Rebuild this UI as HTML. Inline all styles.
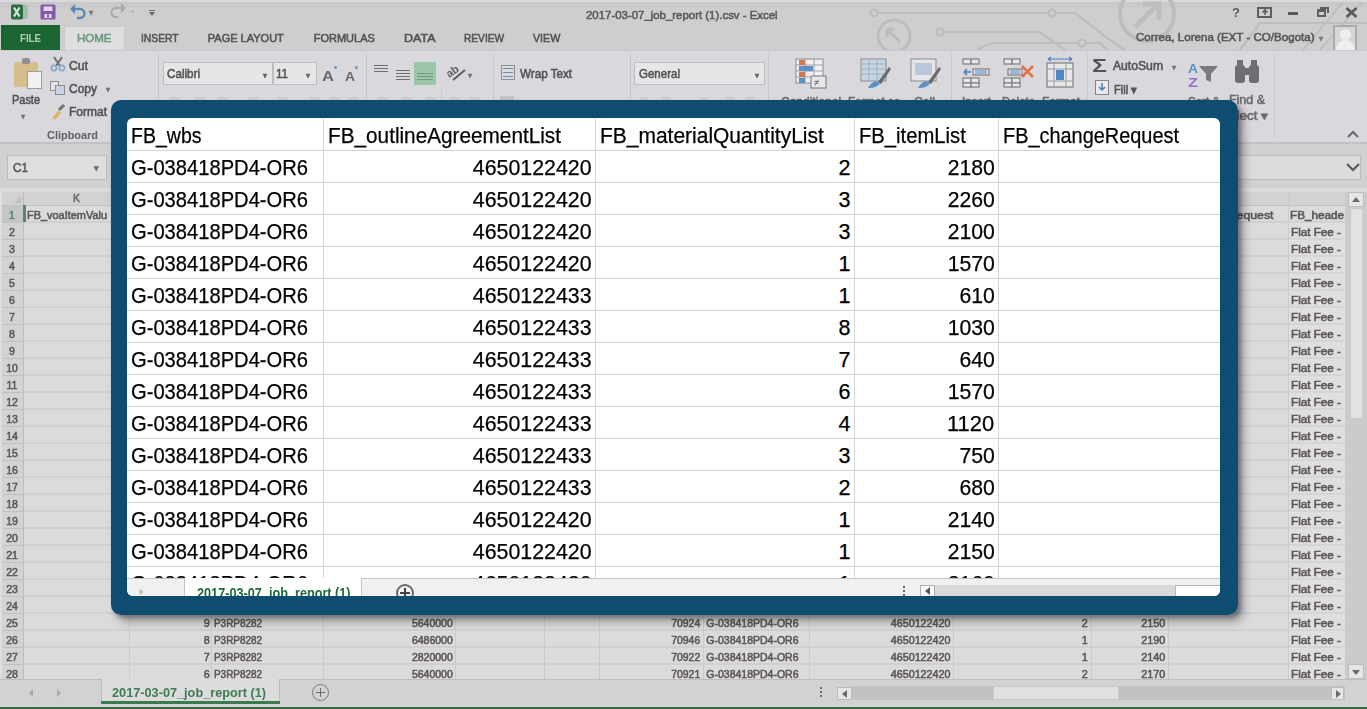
<!DOCTYPE html>
<html><head><meta charset="utf-8">
<style>
*{margin:0;padding:0;box-sizing:border-box}
html,body{width:1367px;height:709px;overflow:hidden;background:#d8d8da;font-family:"Liberation Sans",sans-serif;position:relative}
.a{position:absolute}
.t{position:absolute;white-space:pre;line-height:1}
svg{position:absolute;overflow:visible}
</style></head><body>
<div class="a" style="left:0;top:0;width:1367px;height:709px;filter:blur(0.5px)">
<div class="a" style="left:0px;top:0px;width:1367px;height:50px;background:#cececf;"></div>
<div class="a" style="left:0px;top:0px;width:1367px;height:1.5px;background:#dadadc;"></div>
<div class="a" style="left:0px;top:1.5px;width:1367px;height:5px;background:#c9c9cb;"></div>
<svg style="left:0;top:0" width="1367" height="50" viewBox="0 0 1367 50">
<g fill="none" stroke="#bdbdbf" stroke-width="2.2">
<circle cx="874" cy="13" r="3.5"/><path d="M877.5 13H1048.5"/><circle cx="1052" cy="13" r="3.5"/><path d="M1055.5 13H1075L1110 40L1125 50"/>
<circle cx="894" cy="36" r="16" stroke-width="3"/><path d="M887 29L900 42M887 29h8M887 29v8" stroke-width="3"/>
<circle cx="940" cy="32" r="3.5"/><path d="M943.5 32H1040L1065 50"/>
<path d="M975 52Q985 43 1000 43H1078"/><circle cx="1082" cy="43" r="3.5"/><path d="M1085.5 43H1100L1110 52"/>
<circle cx="1147" cy="14" r="27" stroke-width="4"/><path d="M1135 27L1158 4M1143 4h16v16" stroke-width="5"/>
<path d="M1000 0L1080 0" stroke="none"/>
<path d="M1343 2L1303 50M1362 2L1320 50" stroke-width="1.8"/>
<path d="M1240 50L1260 23H1367" stroke-width="2.2"/>
</g></svg>
<svg style="left:10px;top:3px" width="18" height="18" viewBox="0 0 18 18">
<rect x="8" y="2.5" width="9" height="13" rx="1.5" fill="#a6bfae" stroke="#8fae99" stroke-width="0.8"/>
<path d="M12 3V15" stroke="#c9d8cd" stroke-width="1"/>
<rect x="1" y="1.5" width="12" height="15" rx="2" fill="#2a6e42"/>
<path d="M4 4.5L9.5 13.5M9.5 4.5L4 13.5" stroke="#d5e3d9" stroke-width="2.2"/>
</svg>
<svg style="left:40px;top:4px" width="16" height="16" viewBox="0 0 16 16">
<rect x="0.5" y="0.5" width="15" height="15" rx="1.5" fill="#8459aa"/>
<rect x="3.5" y="2.5" width="9" height="4.5" fill="#e2d6ec"/>
<rect x="4.5" y="10" width="7" height="4" fill="#e2d6ec"/>
<rect x="7" y="10.5" width="2" height="3" fill="#8459aa"/>
</svg>
<svg style="left:68px;top:1px" width="20" height="18" viewBox="0 0 20 18"><path d="M4 8H12A4.5 4.5 0 0 1 12 17H9" fill="none" stroke="#5d86b3" stroke-width="2.4"/><path d="M2 8L7 3V13Z" fill="#5d86b3"/></svg>
<svg style="left:108px;top:1px" width="20" height="18" viewBox="0 0 20 18"><path d="M16 7H8A4.5 4.5 0 0 0 8 16H10" fill="none" stroke="#a9a9ab" stroke-width="2"/><path d="M18 7L13 2V12Z" fill="#a9a9ab"/></svg>
<div class="a" style="left:149px;top:10px;width:6px;height:1.3px;background:#6a6a6a;"></div>
<svg style="left:149px;top:12px" width="6" height="4" viewBox="0 0 6 4"><path d="M0 0H6L3 4Z" fill="#6a6a6a"/></svg>
<div class="a" style="left:1257px;top:6.5px;width:15px;height:11px;border:2px solid #5e5e60;border-top-width:2.5px"></div>
<svg style="left:1261px;top:9px" width="8" height="7" viewBox="0 0 8 7"><path d="M4 1V6M1.5 3.5L4 1L6.5 3.5" stroke="#5e5e60" stroke-width="1.6" fill="none"/></svg>
<div class="a" style="left:1288px;top:12px;width:10px;height:3px;background:#5a5a5c;"></div>
<div class="a" style="left:1317px;top:9px;width:9px;height:8px;border:2px solid #5e5e60;border-top-width:3px"></div>
<div class="a" style="left:1320px;top:6.5px;width:8.5px;height:6px;border:2px solid #5e5e60;border-bottom:none;border-left:none"></div>
<svg style="left:1345px;top:7px" width="13" height="11" viewBox="0 0 13 11"><path d="M1.5 1L11.5 10M11.5 1L1.5 10" stroke="#5a5a5c" stroke-width="2.8"/></svg>
<div class="a" style="left:1px;top:25px;width:59px;height:25px;background:#1b6533;"></div>
<div class="a" style="left:64px;top:26px;width:61px;height:24px;background:#dedee0;border:1px solid #c9c9cb;border-bottom:none;"></div>
<div class="a" style="left:1333px;top:25px;width:24px;height:25px;background:#d6d6d8;border:2px solid #ababad;border-bottom:none;"></div>
<div class="a" style="left:1340px;top:29px;width:11px;height:11px;border-radius:50%;background:#eeeef0"></div>
<div class="a" style="left:1336px;top:40px;width:19px;height:10px;border-radius:9px 9px 0 0;background:#eeeef0"></div>
<div class="a" style="left:0px;top:50px;width:1367px;height:93px;background:#d9d8dc;"></div>
<div class="a" style="left:0px;top:49.5px;width:1367px;height:1.5px;background:#cacacc;"></div>
<div class="a" style="left:0px;top:142px;width:1367px;height:1.5px;background:#c2c2c4;"></div>
<div class="a" style="left:441px;top:86px;width:1px;height:14px;background:#cbcbcd;"></div>
<div class="a" style="left:158px;top:54px;width:1px;height:84px;background:#c7c7c9;"></div>
<div class="a" style="left:366px;top:54px;width:1px;height:84px;background:#c7c7c9;"></div>
<div class="a" style="left:493px;top:54px;width:1px;height:84px;background:#c7c7c9;"></div>
<div class="a" style="left:630px;top:54px;width:1px;height:84px;background:#c7c7c9;"></div>
<div class="a" style="left:768px;top:54px;width:1px;height:84px;background:#c7c7c9;"></div>
<div class="a" style="left:951px;top:54px;width:1px;height:84px;background:#c7c7c9;"></div>
<div class="a" style="left:1087px;top:54px;width:1px;height:84px;background:#c7c7c9;"></div>
<div class="a" style="left:1274px;top:54px;width:1px;height:84px;background:#c7c7c9;"></div>
<div class="a" style="left:14px;top:62px;width:24px;height:25px;background:#d6bd8c;border-radius:2px;"></div>
<div class="a" style="left:22px;top:58px;width:8px;height:6px;background:#8f8f8f;border-radius:2px;"></div>
<div class="a" style="left:27px;top:71px;width:15px;height:18px;background:#f1f1f1;border:1.5px solid #9c9c9c"></div>
<svg style="left:49px;top:56px" width="18" height="16" viewBox="0 0 18 16"><path d="M5 1L11 10M13 1L7 10" stroke="#707070" stroke-width="2"/><circle cx="5" cy="12" r="2.6" fill="none" stroke="#8aa6c9" stroke-width="1.6"/><circle cx="13" cy="12" r="2.6" fill="none" stroke="#8aa6c9" stroke-width="1.6"/></svg>
<div class="a" style="left:50px;top:81px;width:9px;height:10px;border:1.3px solid #909090;background:#e4e4e6"></div>
<div class="a" style="left:55px;top:85px;width:10px;height:10px;border:1.3px solid #909090;background:#c7d3e2"></div>
<svg style="left:50px;top:104px" width="16" height="16" viewBox="0 0 16 16"><path d="M9 6L14 1" stroke="#707070" stroke-width="3"/><path d="M2 14L9 6L11 9L5 16Z" fill="#d9b66b"/></svg>
<div class="a" style="left:163px;top:62px;width:110px;height:23px;background:#e6e6e8;border:1px solid #bdbdbf"></div>
<div class="a" style="left:273px;top:62px;width:44px;height:23px;background:#e6e6e8;border:1px solid #bdbdbf"></div>
<div class="a" style="left:334px;top:66px;width:2.5px;height:2.5px;background:#6d9ad0;border-radius:50%;"></div>
<div class="a" style="left:355px;top:66px;width:2.5px;height:2.5px;background:#6d9ad0;border-radius:50%;"></div>
<div class="a" style="left:374px;top:64.5px;width:14px;height:1.8px;background:#6e6e70;"></div>
<div class="a" style="left:374px;top:67.5px;width:14px;height:1.8px;background:#6e6e70;"></div>
<div class="a" style="left:374px;top:70.5px;width:14px;height:1.8px;background:#6e6e70;"></div>
<div class="a" style="left:396px;top:69.5px;width:14px;height:1.8px;background:#6e6e70;"></div>
<div class="a" style="left:396px;top:72.5px;width:14px;height:1.8px;background:#6e6e70;"></div>
<div class="a" style="left:396px;top:75.5px;width:14px;height:1.8px;background:#6e6e70;"></div>
<div class="a" style="left:396px;top:78.5px;width:14px;height:1.8px;background:#6e6e70;"></div>
<div class="a" style="left:414px;top:62px;width:22px;height:23px;background:#9ac7a8;"></div>
<div class="a" style="left:417px;top:72.5px;width:16px;height:1.8px;background:#6f9a7d;"></div>
<div class="a" style="left:417px;top:75.5px;width:16px;height:1.8px;background:#6f9a7d;"></div>
<div class="a" style="left:417px;top:78.5px;width:16px;height:1.8px;background:#6f9a7d;"></div>
<svg style="left:447px;top:63px" width="22" height="20" viewBox="0 0 22 20"><text x="0" y="12" font-family="Liberation Sans" font-size="11" font-weight="bold" fill="#5e5e60" transform="rotate(-35 6 10)">ab</text><path d="M6 17L18 7" stroke="#5e5e60" stroke-width="2"/></svg>
<div class="a" style="left:170px;top:97px;width:10px;height:3px;background:#cdcdcf;"></div>
<div class="a" style="left:195px;top:97px;width:10px;height:3px;background:#cdcdcf;"></div>
<div class="a" style="left:218px;top:97px;width:10px;height:3px;background:#cdcdcf;"></div>
<div class="a" style="left:248px;top:97px;width:10px;height:3px;background:#cdcdcf;"></div>
<div class="a" style="left:278px;top:97px;width:10px;height:3px;background:#cdcdcf;"></div>
<div class="a" style="left:310px;top:97px;width:10px;height:3px;background:#cdcdcf;"></div>
<div class="a" style="left:330px;top:97px;width:10px;height:3px;background:#cdcdcf;"></div>
<div class="a" style="left:348px;top:97px;width:10px;height:3px;background:#cdcdcf;"></div>
<div class="a" style="left:378px;top:97px;width:10px;height:3px;background:#cdcdcf;"></div>
<div class="a" style="left:402px;top:97px;width:10px;height:3px;background:#cdcdcf;"></div>
<div class="a" style="left:426px;top:97px;width:10px;height:3px;background:#cdcdcf;"></div>
<div class="a" style="left:450px;top:97px;width:10px;height:3px;background:#cdcdcf;"></div>
<div class="a" style="left:470px;top:97px;width:10px;height:3px;background:#cdcdcf;"></div>
<div class="a" style="left:501px;top:65px;width:14px;height:15px;border:1px solid #8f8f8f;background:#d8dde4"></div>
<div class="a" style="left:503px;top:68px;width:10px;height:1.2px;background:#7a8aa0;"></div>
<div class="a" style="left:503px;top:72px;width:10px;height:1.2px;background:#7a8aa0;"></div>
<div class="a" style="left:503px;top:76px;width:10px;height:1.2px;background:#7a8aa0;"></div>
<div class="a" style="left:500px;top:96px;width:14px;height:4px;background:#c3c3c5;"></div>
<div class="a" style="left:634px;top:62px;width:131px;height:23px;background:#e6e6e8;border:1px solid #bdbdbf"></div>
<div class="a" style="left:640px;top:97px;width:8px;height:3px;background:#cdcdcf;"></div>
<div class="a" style="left:662px;top:97px;width:8px;height:3px;background:#cdcdcf;"></div>
<div class="a" style="left:700px;top:97px;width:8px;height:3px;background:#cdcdcf;"></div>
<div class="a" style="left:726px;top:97px;width:8px;height:3px;background:#cdcdcf;"></div>
<div class="a" style="left:746px;top:97px;width:8px;height:3px;background:#cdcdcf;"></div>
<svg style="left:795px;top:58px" width="32" height="31" viewBox="0 0 32 31">
<rect x="1" y="1" width="27" height="24" fill="#f0f0f2" stroke="#8c8c8e"/>
<path d="M1 7H28M1 13H28M1 19H28M10 1V25M19 1V25" stroke="#a0a0a2"/>
<rect x="4" y="2" width="6" height="5" fill="#d9774c"/><rect x="4" y="8" width="14" height="5" fill="#5b8fc6"/><rect x="4" y="14" width="6" height="5" fill="#d9774c"/><rect x="4" y="20" width="6" height="5" fill="#5b8fc6"/>
<rect x="16" y="18" width="15" height="12" fill="#e8e8ea" stroke="#777"/><text x="19" y="28" font-size="10" font-family="Liberation Sans" fill="#555">≠</text>
</svg>
<svg style="left:860px;top:58px" width="32" height="31" viewBox="0 0 32 31">
<rect x="1" y="1" width="25" height="22" fill="#c7d4e2" stroke="#8c8c8e"/>
<path d="M1 6H26M1 11H26M1 16H26M9 1V23M17 1V23" stroke="#9fb0c4"/>
<path d="M18 24L29 9L31 11L21 26Z" fill="#6a6a6a"/><path d="M8 30Q14 20 20 25Q18 30 8 30Z" fill="#5b8fc6"/>
</svg>
<svg style="left:910px;top:58px" width="32" height="31" viewBox="0 0 32 31">
<rect x="1" y="1" width="25" height="22" fill="#e6e6e8" stroke="#8c8c8e"/>
<rect x="5" y="5" width="17" height="12" fill="#b7c8da"/>
<path d="M18 24L29 9L31 11L21 26Z" fill="#6a6a6a"/><path d="M8 30Q14 20 20 25Q18 30 8 30Z" fill="#5b8fc6"/>
</svg>
<svg style="left:961px;top:58px" width="30" height="30" viewBox="0 0 30 30">
<g fill="#e8e8ea" stroke="#858587" stroke-width="1.3"><rect x="2" y="1" width="8" height="5"/><rect x="10" y="1" width="8" height="5"/><rect x="12" y="11" width="16" height="6"/><rect x="2" y="20" width="8" height="5"/><rect x="10" y="20" width="8" height="5"/><rect x="2" y="25" width="8" height="4"/><rect x="10" y="25" width="8" height="4"/></g>
<rect x="14" y="12" width="12" height="4" fill="#9bb7d6"/>
<path d="M3 14H10M3 14L6 11M3 14L6 17" stroke="#4a80c0" stroke-width="1.6" fill="none"/>
</svg>
<svg style="left:1002px;top:58px" width="34" height="30" viewBox="0 0 34 30">
<g fill="#e8e8ea" stroke="#858587" stroke-width="1.3"><rect x="2" y="1" width="8" height="5"/><rect x="10" y="1" width="8" height="5"/><rect x="6" y="11" width="14" height="6"/><rect x="2" y="20" width="8" height="5"/><rect x="10" y="20" width="8" height="5"/><rect x="2" y="25" width="8" height="4"/><rect x="10" y="25" width="8" height="4"/></g>
<rect x="8" y="12" width="10" height="4" fill="#9bb7d6"/>
<path d="M20 8L31 19M31 8L20 19" stroke="#e0733f" stroke-width="2.6"/>
</svg>
<svg style="left:1044px;top:57px" width="32" height="32" viewBox="0 0 32 32">
<rect x="3" y="6" width="26" height="24" fill="#e8e8ea" stroke="#858587" stroke-width="1.3"/>
<path d="M3 12H29M3 24H29M10 6V30M22 6V30" stroke="#9a9a9c"/>
<rect x="12" y="13" width="8" height="10" fill="#4f87c4"/>
<path d="M4 2H28M4 2L7 0M4 2L7 4M28 2L25 0M28 2L25 4" stroke="#4a80c0" stroke-width="1.2" fill="none"/>
</svg>
<div class="a" style="left:1095px;top:80px;width:14px;height:15px;border:1.3px solid #858587;background:#e9e9eb"></div>
<svg style="left:1096px;top:81px" width="12" height="12" viewBox="0 0 12 12"><path d="M6 2V9M3 6L6 9L9 6" stroke="#4a80c0" stroke-width="1.5" fill="none"/></svg>
<svg style="left:1198px;top:64px" width="22" height="20" viewBox="0 0 22 20"><path d="M1 2H20L13 10V18L8 16V10Z" fill="#7a7a7c"/></svg>
<svg style="left:1233px;top:59px" width="28" height="26" viewBox="0 0 28 26"><g fill="#6e6e70"><rect x="2" y="6" width="10" height="18" rx="3"/><rect x="16" y="6" width="10" height="18" rx="3"/><rect x="4" y="1" width="6" height="8"/><rect x="18" y="1" width="6" height="8"/><rect x="10" y="9" width="8" height="7"/></g></svg>
<svg style="left:1346px;top:129px" width="14" height="10" viewBox="0 0 14 10"><path d="M2 8L7 3L12 8" fill="none" stroke="#6a6a6c" stroke-width="2"/></svg>
<div class="a" style="left:0px;top:143.5px;width:1367px;height:48.5px;background:#d1d1d4;"></div>
<div class="a" style="left:7px;top:155px;width:100px;height:25px;background:#dededf;border:1.5px solid #bcbcbf"></div>
<div class="a" style="left:120px;top:155px;width:1241px;height:25px;background:#dcdcdf;border:1.5px solid #bcbcbf"></div>
<svg style="left:1345px;top:162px" width="16" height="10" viewBox="0 0 16 10"><path d="M2 2L8 8L14 2" fill="none" stroke="#5a5a5c" stroke-width="2.2"/></svg>
<div class="a" style="left:0px;top:188px;width:1367px;height:492px;background:#dbdbde;"></div>
<div class="a" style="left:0px;top:192px;width:1345px;height:13px;background:#d2d2d5;"></div>
<div class="a" style="left:0px;top:205px;width:23px;height:475px;background:#d3d3d5;"></div>
<svg style="left:14px;top:196px" width="7" height="7" viewBox="0 0 7 7"><path d="M7 0V7H0Z" fill="#c0c0c2"/></svg>
<div class="a" style="left:0px;top:205px;width:23px;height:17px;background:#c6c6c8;"></div>
<div class="a" style="left:0px;top:204.5px;width:1345px;height:1px;background:#c2c2c4;"></div>
<div class="a" style="left:23px;top:221px;width:1322px;height:2px;background:#d0d0d3;"></div>
<div class="a" style="left:0px;top:221.5px;width:23px;height:1px;background:#c0c0c2;"></div>
<div class="a" style="left:23px;top:238px;width:1322px;height:2px;background:#d0d0d3;"></div>
<div class="a" style="left:0px;top:238.5px;width:23px;height:1px;background:#c0c0c2;"></div>
<div class="a" style="left:23px;top:255px;width:1322px;height:2px;background:#d0d0d3;"></div>
<div class="a" style="left:0px;top:255.5px;width:23px;height:1px;background:#c0c0c2;"></div>
<div class="a" style="left:23px;top:272px;width:1322px;height:2px;background:#d0d0d3;"></div>
<div class="a" style="left:0px;top:272.5px;width:23px;height:1px;background:#c0c0c2;"></div>
<div class="a" style="left:23px;top:289px;width:1322px;height:2px;background:#d0d0d3;"></div>
<div class="a" style="left:0px;top:289.5px;width:23px;height:1px;background:#c0c0c2;"></div>
<div class="a" style="left:23px;top:306px;width:1322px;height:2px;background:#d0d0d3;"></div>
<div class="a" style="left:0px;top:306.5px;width:23px;height:1px;background:#c0c0c2;"></div>
<div class="a" style="left:23px;top:323px;width:1322px;height:2px;background:#d0d0d3;"></div>
<div class="a" style="left:0px;top:323.5px;width:23px;height:1px;background:#c0c0c2;"></div>
<div class="a" style="left:23px;top:340px;width:1322px;height:2px;background:#d0d0d3;"></div>
<div class="a" style="left:0px;top:340.5px;width:23px;height:1px;background:#c0c0c2;"></div>
<div class="a" style="left:23px;top:357px;width:1322px;height:2px;background:#d0d0d3;"></div>
<div class="a" style="left:0px;top:357.5px;width:23px;height:1px;background:#c0c0c2;"></div>
<div class="a" style="left:23px;top:374px;width:1322px;height:2px;background:#d0d0d3;"></div>
<div class="a" style="left:0px;top:374.5px;width:23px;height:1px;background:#c0c0c2;"></div>
<div class="a" style="left:23px;top:391px;width:1322px;height:2px;background:#d0d0d3;"></div>
<div class="a" style="left:0px;top:391.5px;width:23px;height:1px;background:#c0c0c2;"></div>
<div class="a" style="left:23px;top:408px;width:1322px;height:2px;background:#d0d0d3;"></div>
<div class="a" style="left:0px;top:408.5px;width:23px;height:1px;background:#c0c0c2;"></div>
<div class="a" style="left:23px;top:425px;width:1322px;height:2px;background:#d0d0d3;"></div>
<div class="a" style="left:0px;top:425.5px;width:23px;height:1px;background:#c0c0c2;"></div>
<div class="a" style="left:23px;top:442px;width:1322px;height:2px;background:#d0d0d3;"></div>
<div class="a" style="left:0px;top:442.5px;width:23px;height:1px;background:#c0c0c2;"></div>
<div class="a" style="left:23px;top:459px;width:1322px;height:2px;background:#d0d0d3;"></div>
<div class="a" style="left:0px;top:459.5px;width:23px;height:1px;background:#c0c0c2;"></div>
<div class="a" style="left:23px;top:476px;width:1322px;height:2px;background:#d0d0d3;"></div>
<div class="a" style="left:0px;top:476.5px;width:23px;height:1px;background:#c0c0c2;"></div>
<div class="a" style="left:23px;top:493px;width:1322px;height:2px;background:#d0d0d3;"></div>
<div class="a" style="left:0px;top:493.5px;width:23px;height:1px;background:#c0c0c2;"></div>
<div class="a" style="left:23px;top:510px;width:1322px;height:2px;background:#d0d0d3;"></div>
<div class="a" style="left:0px;top:510.5px;width:23px;height:1px;background:#c0c0c2;"></div>
<div class="a" style="left:23px;top:527px;width:1322px;height:2px;background:#d0d0d3;"></div>
<div class="a" style="left:0px;top:527.5px;width:23px;height:1px;background:#c0c0c2;"></div>
<div class="a" style="left:23px;top:544px;width:1322px;height:2px;background:#d0d0d3;"></div>
<div class="a" style="left:0px;top:544.5px;width:23px;height:1px;background:#c0c0c2;"></div>
<div class="a" style="left:23px;top:561px;width:1322px;height:2px;background:#d0d0d3;"></div>
<div class="a" style="left:0px;top:561.5px;width:23px;height:1px;background:#c0c0c2;"></div>
<div class="a" style="left:23px;top:578px;width:1322px;height:2px;background:#d0d0d3;"></div>
<div class="a" style="left:0px;top:578.5px;width:23px;height:1px;background:#c0c0c2;"></div>
<div class="a" style="left:23px;top:595px;width:1322px;height:2px;background:#d0d0d3;"></div>
<div class="a" style="left:0px;top:595.5px;width:23px;height:1px;background:#c0c0c2;"></div>
<div class="a" style="left:23px;top:612px;width:1322px;height:2px;background:#d0d0d3;"></div>
<div class="a" style="left:0px;top:612.5px;width:23px;height:1px;background:#c0c0c2;"></div>
<div class="a" style="left:23px;top:629px;width:1322px;height:2px;background:#d0d0d3;"></div>
<div class="a" style="left:0px;top:629.5px;width:23px;height:1px;background:#c0c0c2;"></div>
<div class="a" style="left:23px;top:646px;width:1322px;height:2px;background:#d0d0d3;"></div>
<div class="a" style="left:0px;top:646.5px;width:23px;height:1px;background:#c0c0c2;"></div>
<div class="a" style="left:23px;top:663px;width:1322px;height:2px;background:#d0d0d3;"></div>
<div class="a" style="left:0px;top:663.5px;width:23px;height:1px;background:#c0c0c2;"></div>
<div class="a" style="left:23px;top:680px;width:1322px;height:2px;background:#d0d0d3;"></div>
<div class="a" style="left:0px;top:680.5px;width:23px;height:1px;background:#c0c0c2;"></div>
<div class="a" style="left:22.5px;top:192px;width:1px;height:488px;background:#cbcbcd;"></div>
<div class="a" style="left:128.5px;top:192px;width:1px;height:488px;background:#cbcbcd;"></div>
<div class="a" style="left:210.5px;top:192px;width:1px;height:488px;background:#cbcbcd;"></div>
<div class="a" style="left:322.5px;top:192px;width:1px;height:488px;background:#cbcbcd;"></div>
<div class="a" style="left:454.5px;top:192px;width:1px;height:488px;background:#cbcbcd;"></div>
<div class="a" style="left:543.5px;top:192px;width:1px;height:488px;background:#cbcbcd;"></div>
<div class="a" style="left:598.5px;top:192px;width:1px;height:488px;background:#cbcbcd;"></div>
<div class="a" style="left:702.5px;top:192px;width:1px;height:488px;background:#cbcbcd;"></div>
<div class="a" style="left:808.5px;top:192px;width:1px;height:488px;background:#cbcbcd;"></div>
<div class="a" style="left:952.5px;top:192px;width:1px;height:488px;background:#cbcbcd;"></div>
<div class="a" style="left:1090.5px;top:192px;width:1px;height:488px;background:#cbcbcd;"></div>
<div class="a" style="left:1167.5px;top:192px;width:1px;height:488px;background:#cbcbcd;"></div>
<div class="a" style="left:1287.5px;top:192px;width:1px;height:488px;background:#cbcbcd;"></div>
<div class="a" style="left:1344.5px;top:192px;width:1px;height:488px;background:#cbcbcd;"></div>
<div class="a" style="left:22.5px;top:192px;width:1.5px;height:488px;background:#bdbdc0;"></div>
<div class="a" style="left:0px;top:192px;width:2px;height:488px;background:#dededf;"></div>
<div class="a" style="left:23px;top:205px;width:2.5px;height:17px;background:#4f8a62;"></div>
<div class="a" style="left:1289px;top:222px;width:56px;height:458px;background:rgba(255,255,255,.12);"></div>
<div class="a" style="left:1345px;top:192px;width:22px;height:488px;background:#cbcbcd;"></div>
<div class="a" style="left:1348px;top:192px;width:16px;height:15px;background:#e6e6e8;border:1px solid #bcbcbe"></div>
<svg style="left:1351px;top:196px" width="10" height="7" viewBox="0 0 10 7"><path d="M1 6L5 1L9 6Z" fill="#6a6a6c"/></svg>
<div class="a" style="left:1350px;top:208px;width:13px;height:211px;background:#e2e2e4;border:1px solid #c9c9cb;"></div>
<div class="a" style="left:1348px;top:664px;width:16px;height:15px;background:#e6e6e8;border:1px solid #bcbcbe"></div>
<svg style="left:1351px;top:669px" width="10" height="7" viewBox="0 0 10 7"><path d="M1 1L5 6L9 1Z" fill="#6a6a6c"/></svg>
<div class="a" style="left:0px;top:679px;width:1367px;height:27px;background:#d2d2d4;"></div>
<div class="a" style="left:0px;top:679px;width:101px;height:1px;background:#bdbdbf;"></div>
<svg style="left:25px;top:687px" width="40" height="12" viewBox="0 0 40 12"><path d="M8 2L4 6L8 10Z" fill="#a9a9ab"/><path d="M32 2L36 6L32 10Z" fill="#a9a9ab"/></svg>
<div class="a" style="left:101px;top:679px;width:179px;height:24px;background:#dcdcde;border-left:1px solid #bdbdbf;border-right:1px solid #bdbdbf;"></div>
<div class="a" style="left:101px;top:701px;width:179px;height:2.5px;background:#3a7a4e;"></div>
<div class="a" style="left:280px;top:679px;width:1087px;height:1px;background:#bdbdbf;"></div>
<div class="a" style="left:312px;top:684px;width:17px;height:17px;border-radius:50%;border:1.5px solid #7a7a7c"></div>
<div class="a" style="left:316px;top:691.8px;width:9px;height:1.6px;background:#6a6a6c;"></div>
<div class="a" style="left:319.7px;top:688px;width:1.6px;height:9px;background:#6a6a6c;"></div>
<div class="a" style="left:820px;top:687px;width:2px;height:2px;background:#6a6a6c;"></div>
<div class="a" style="left:820px;top:691px;width:2px;height:2px;background:#6a6a6c;"></div>
<div class="a" style="left:820px;top:695px;width:2px;height:2px;background:#6a6a6c;"></div>
<div class="a" style="left:852px;top:686px;width:493px;height:14px;background:#c2c2c4;"></div>
<div class="a" style="left:837px;top:687px;width:15px;height:13px;background:#e6e6e8;border:1px solid #bcbcbe"></div>
<svg style="left:841px;top:690px" width="7" height="8" viewBox="0 0 7 8"><path d="M6 0L1 4L6 8Z" fill="#6a6a6c"/></svg>
<div class="a" style="left:993px;top:686px;width:126px;height:14px;background:#e0e0e2;border:1px solid #c6c6c8;"></div>
<div class="a" style="left:1331px;top:687px;width:13px;height:13px;background:#e6e6e8;border:1px solid #bcbcbe"></div>
<svg style="left:1335px;top:690px" width="7" height="8" viewBox="0 0 7 8"><path d="M1 0L6 4L1 8Z" fill="#6a6a6c"/></svg>
<div class="a" style="left:0px;top:706.5px;width:1367px;height:2.5px;background:#2f6b41;"></div>
<span class="t" style="left:89.00px;top:9.00px;font-size:8px;height:8px;font-family:'Liberation Sans',sans-serif;color:#777;font-weight:normal;-webkit-text-stroke:0.55px #777;">▾</span>
<span class="t" style="left:131.00px;top:7.00px;font-size:9px;height:9px;font-family:'Liberation Sans',sans-serif;color:#a9a9ab;font-weight:normal;-webkit-text-stroke:0.55px #a9a9ab;">-</span>
<span class="t" style="left:586.40px;top:10.00px;font-size:11.5px;height:11.5px;font-family:'Liberation Sans',sans-serif;color:#5a5a5c;font-weight:normal;transform:scaleX(0.9925);transform-origin:left top;-webkit-text-stroke:0.55px #5a5a5c;">2017-03-07_job_report (1).csv - Excel</span>
<span class="t" style="left:1231.50px;top:7.00px;font-size:12.5px;height:12.5px;font-family:'Liberation Sans',sans-serif;color:#5a5a5c;font-weight:bold;transform:scaleX(1.0470);transform-origin:left top;">?</span>
<span class="t" style="left:19.50px;top:33.00px;font-size:11px;height:11px;font-family:'Liberation Sans',sans-serif;color:#b5ccbb;font-weight:bold;transform:scaleX(0.8807);transform-origin:left top;">FILE</span>
<span class="t" style="left:76.70px;top:33.00px;font-size:11px;height:11px;font-family:'Liberation Sans',sans-serif;color:#6c9a7c;font-weight:normal;transform:scaleX(1.0455);transform-origin:left top;-webkit-text-stroke:0.55px #6c9a7c;">HOME</span>
<span class="t" style="left:140.50px;top:33.00px;font-size:11px;height:11px;font-family:'Liberation Sans',sans-serif;color:#535355;font-weight:normal;transform:scaleX(0.9342);transform-origin:left top;-webkit-text-stroke:0.55px #535355;">INSERT</span>
<span class="t" style="left:207.80px;top:33.00px;font-size:11px;height:11px;font-family:'Liberation Sans',sans-serif;color:#535355;font-weight:normal;-webkit-text-stroke:0.55px #535355;">PAGE LAYOUT</span>
<span class="t" style="left:313.70px;top:33.00px;font-size:11px;height:11px;font-family:'Liberation Sans',sans-serif;color:#535355;font-weight:normal;-webkit-text-stroke:0.55px #535355;">FORMULAS</span>
<span class="t" style="left:403.50px;top:33.00px;font-size:11px;height:11px;font-family:'Liberation Sans',sans-serif;color:#535355;font-weight:normal;transform:scaleX(1.1364);transform-origin:left top;-webkit-text-stroke:0.55px #535355;">DATA</span>
<span class="t" style="left:463.80px;top:33.00px;font-size:11px;height:11px;font-family:'Liberation Sans',sans-serif;color:#535355;font-weight:normal;transform:scaleX(0.9238);transform-origin:left top;-webkit-text-stroke:0.55px #535355;">REVIEW</span>
<span class="t" style="left:533.00px;top:33.00px;font-size:11px;height:11px;font-family:'Liberation Sans',sans-serif;color:#535355;font-weight:normal;transform:scaleX(0.9707);transform-origin:left top;-webkit-text-stroke:0.55px #535355;">VIEW</span>
<span class="t" style="left:1136.00px;top:32.00px;font-size:11.5px;height:11.5px;font-family:'Liberation Sans',sans-serif;color:#555557;font-weight:normal;transform:scaleX(1.0063);transform-origin:left top;-webkit-text-stroke:0.55px #555557;">Correa, Lorena (EXT - CO/Bogota)</span>
<span class="t" style="left:1319.00px;top:35.00px;font-size:8px;height:8px;font-family:'Liberation Sans',sans-serif;color:#777;font-weight:normal;-webkit-text-stroke:0.55px #777;">▾</span>
<span class="t" style="left:12.00px;top:94.00px;font-size:12px;height:12px;font-family:'Liberation Sans',sans-serif;color:#535355;font-weight:normal;transform:scaleX(0.9124);transform-origin:left top;-webkit-text-stroke:0.55px #535355;">Paste</span>
<span class="t" style="left:21.00px;top:113.00px;font-size:8px;height:8px;font-family:'Liberation Sans',sans-serif;color:#777;font-weight:normal;-webkit-text-stroke:0.55px #777;">▾</span>
<span class="t" style="left:69.00px;top:60.00px;font-size:12px;height:12px;font-family:'Liberation Sans',sans-serif;color:#535355;font-weight:normal;transform:scaleX(1.0167);transform-origin:left top;-webkit-text-stroke:0.55px #535355;">Cut</span>
<span class="t" style="left:69.00px;top:83.00px;font-size:12px;height:12px;font-family:'Liberation Sans',sans-serif;color:#535355;font-weight:normal;-webkit-text-stroke:0.55px #535355;">Copy</span>
<span class="t" style="left:106.00px;top:86.00px;font-size:8px;height:8px;font-family:'Liberation Sans',sans-serif;color:#777;font-weight:normal;-webkit-text-stroke:0.55px #777;">▾</span>
<span class="t" style="left:69.00px;top:106.00px;font-size:12px;height:12px;font-family:'Liberation Sans',sans-serif;color:#535355;font-weight:normal;-webkit-text-stroke:0.55px #535355;">Format</span>
<span class="t" style="left:46.50px;top:130.00px;font-size:11.5px;height:11.5px;font-family:'Liberation Sans',sans-serif;color:#606062;font-weight:bold;transform:scaleX(0.9502);transform-origin:left top;">Clipboard</span>
<span class="t" style="left:167.00px;top:68.00px;font-size:12px;height:12px;font-family:'Liberation Sans',sans-serif;color:#555;font-weight:normal;transform:scaleX(0.9701);transform-origin:left top;-webkit-text-stroke:0.55px #555;">Calibri</span>
<span class="t" style="left:263.00px;top:72.00px;font-size:8px;height:8px;font-family:'Liberation Sans',sans-serif;color:#666;font-weight:normal;-webkit-text-stroke:0.55px #666;">▾</span>
<span class="t" style="left:276.00px;top:68.00px;font-size:12px;height:12px;font-family:'Liberation Sans',sans-serif;color:#555;font-weight:normal;transform:scaleX(0.9624);transform-origin:left top;-webkit-text-stroke:0.55px #555;">11</span>
<span class="t" style="left:306.00px;top:72.00px;font-size:8px;height:8px;font-family:'Liberation Sans',sans-serif;color:#666;font-weight:normal;-webkit-text-stroke:0.55px #666;">▾</span>
<span class="t" style="left:322.00px;top:68.00px;font-size:15px;height:15px;font-family:'Liberation Sans',sans-serif;color:#6a6a6a;font-weight:bold;transform:scaleX(1.1066);transform-origin:left top;">A</span>
<span class="t" style="left:345.00px;top:71.00px;font-size:12px;height:12px;font-family:'Liberation Sans',sans-serif;color:#6a6a6a;font-weight:bold;transform:scaleX(1.1532);transform-origin:left top;">A</span>
<span class="t" style="left:468.00px;top:72.00px;font-size:8px;height:8px;font-family:'Liberation Sans',sans-serif;color:#777;font-weight:normal;-webkit-text-stroke:0.55px #777;">▾</span>
<span class="t" style="left:520.00px;top:68.00px;font-size:12px;height:12px;font-family:'Liberation Sans',sans-serif;color:#535355;font-weight:normal;transform:scaleX(0.9705);transform-origin:left top;-webkit-text-stroke:0.55px #535355;">Wrap Text</span>
<span class="t" style="left:639.00px;top:68.00px;font-size:12px;height:12px;font-family:'Liberation Sans',sans-serif;color:#555;font-weight:normal;transform:scaleX(0.9601);transform-origin:left top;-webkit-text-stroke:0.55px #555;">General</span>
<span class="t" style="left:755.00px;top:72.00px;font-size:8px;height:8px;font-family:'Liberation Sans',sans-serif;color:#666;font-weight:normal;-webkit-text-stroke:0.55px #666;">▾</span>
<span class="t" style="left:781.00px;top:96.00px;font-size:12px;height:12px;font-family:'Liberation Sans',sans-serif;color:#6a6a6c;font-weight:normal;-webkit-text-stroke:0.55px #6a6a6c;">Conditional</span>
<span class="t" style="left:848.00px;top:96.00px;font-size:12px;height:12px;font-family:'Liberation Sans',sans-serif;color:#6a6a6c;font-weight:normal;transform:scaleX(0.9627);transform-origin:left top;-webkit-text-stroke:0.55px #6a6a6c;">Format as</span>
<span class="t" style="left:914.00px;top:96.00px;font-size:12px;height:12px;font-family:'Liberation Sans',sans-serif;color:#6a6a6c;font-weight:normal;transform:scaleX(1.0159);transform-origin:left top;-webkit-text-stroke:0.55px #6a6a6c;">Cell</span>
<span class="t" style="left:962.00px;top:96.00px;font-size:12px;height:12px;font-family:'Liberation Sans',sans-serif;color:#6a6a6c;font-weight:normal;transform:scaleX(0.9662);transform-origin:left top;-webkit-text-stroke:0.55px #6a6a6c;">Insert</span>
<span class="t" style="left:1002.00px;top:96.00px;font-size:12px;height:12px;font-family:'Liberation Sans',sans-serif;color:#6a6a6c;font-weight:normal;transform:scaleX(0.9514);transform-origin:left top;-webkit-text-stroke:0.55px #6a6a6c;">Delete</span>
<span class="t" style="left:1042.00px;top:96.00px;font-size:12px;height:12px;font-family:'Liberation Sans',sans-serif;color:#6a6a6c;font-weight:normal;-webkit-text-stroke:0.55px #6a6a6c;">Format</span>
<span class="t" style="left:1092.00px;top:56.00px;font-size:19px;height:19px;font-family:'Liberation Sans',sans-serif;color:#555;font-weight:bold;transform:scaleX(1.3151);transform-origin:left top;">Σ</span>
<span class="t" style="left:1113.40px;top:60.00px;font-size:12px;height:12px;font-family:'Liberation Sans',sans-serif;color:#535355;font-weight:normal;transform:scaleX(1.0130);transform-origin:left top;-webkit-text-stroke:0.55px #535355;">AutoSum</span>
<span class="t" style="left:1172.00px;top:64.00px;font-size:8px;height:8px;font-family:'Liberation Sans',sans-serif;color:#777;font-weight:normal;-webkit-text-stroke:0.55px #777;">▾</span>
<span class="t" style="left:1114.00px;top:84.00px;font-size:12px;height:12px;font-family:'Liberation Sans',sans-serif;color:#535355;font-weight:normal;transform:scaleX(0.9322);transform-origin:left top;-webkit-text-stroke:0.55px #535355;">Fill ▾</span>
<span class="t" style="left:1188.00px;top:62.00px;font-size:13px;height:13px;font-family:'Liberation Sans',sans-serif;color:#5b8fc6;font-weight:bold;transform:scaleX(1.0649);transform-origin:left top;">A</span>
<span class="t" style="left:1188.00px;top:76.00px;font-size:13px;height:13px;font-family:'Liberation Sans',sans-serif;color:#9b6fc0;font-weight:bold;transform:scaleX(1.2574);transform-origin:left top;">Z</span>
<span class="t" style="left:1188.00px;top:96.00px;font-size:12px;height:12px;font-family:'Liberation Sans',sans-serif;color:#6a6a6c;font-weight:normal;transform:scaleX(0.9593);transform-origin:left top;-webkit-text-stroke:0.55px #6a6a6c;">Sort &</span>
<span class="t" style="left:1229.00px;top:94.00px;font-size:12px;height:12px;font-family:'Liberation Sans',sans-serif;color:#6a6a6c;font-weight:normal;transform:scaleX(1.0378);transform-origin:left top;-webkit-text-stroke:0.55px #6a6a6c;">Find &</span>
<span class="t" style="left:1220.00px;top:110.00px;font-size:12px;height:12px;font-family:'Liberation Sans',sans-serif;color:#6a6a6c;font-weight:normal;transform:scaleX(1.1245);transform-origin:left top;-webkit-text-stroke:0.55px #6a6a6c;">Select ▾</span>
<span class="t" style="left:13.00px;top:162.00px;font-size:12px;height:12px;font-family:'Liberation Sans',sans-serif;color:#5a5a5c;font-weight:normal;transform:scaleX(0.9776);transform-origin:left top;-webkit-text-stroke:0.55px #5a5a5c;">C1</span>
<span class="t" style="left:94.00px;top:164.00px;font-size:9px;height:9px;font-family:'Liberation Sans',sans-serif;color:#6a6a6c;font-weight:normal;-webkit-text-stroke:0.55px #6a6a6c;">▾</span>
<span class="t" style="left:73.00px;top:194.00px;font-size:10px;height:10px;font-family:'Liberation Sans',sans-serif;color:#6a6a6c;font-weight:normal;transform:scaleX(1.0492);transform-origin:left top;-webkit-text-stroke:0.55px #6a6a6c;">K</span>
<span class="t" style="left:9.08px;top:210.00px;font-size:10.5px;height:10.5px;font-family:'Liberation Sans',sans-serif;color:#4f8a62;font-weight:normal;-webkit-text-stroke:0.55px #4f8a62;">1</span>
<span class="t" style="left:9.08px;top:227.00px;font-size:10.5px;height:10.5px;font-family:'Liberation Sans',sans-serif;color:#5a5a5c;font-weight:normal;-webkit-text-stroke:0.55px #5a5a5c;">2</span>
<span class="t" style="left:9.08px;top:244.00px;font-size:10.5px;height:10.5px;font-family:'Liberation Sans',sans-serif;color:#5a5a5c;font-weight:normal;-webkit-text-stroke:0.55px #5a5a5c;">3</span>
<span class="t" style="left:9.08px;top:261.00px;font-size:10.5px;height:10.5px;font-family:'Liberation Sans',sans-serif;color:#5a5a5c;font-weight:normal;-webkit-text-stroke:0.55px #5a5a5c;">4</span>
<span class="t" style="left:9.08px;top:278.00px;font-size:10.5px;height:10.5px;font-family:'Liberation Sans',sans-serif;color:#5a5a5c;font-weight:normal;-webkit-text-stroke:0.55px #5a5a5c;">5</span>
<span class="t" style="left:9.08px;top:295.00px;font-size:10.5px;height:10.5px;font-family:'Liberation Sans',sans-serif;color:#5a5a5c;font-weight:normal;-webkit-text-stroke:0.55px #5a5a5c;">6</span>
<span class="t" style="left:9.08px;top:312.00px;font-size:10.5px;height:10.5px;font-family:'Liberation Sans',sans-serif;color:#5a5a5c;font-weight:normal;-webkit-text-stroke:0.55px #5a5a5c;">7</span>
<span class="t" style="left:9.08px;top:329.00px;font-size:10.5px;height:10.5px;font-family:'Liberation Sans',sans-serif;color:#5a5a5c;font-weight:normal;-webkit-text-stroke:0.55px #5a5a5c;">8</span>
<span class="t" style="left:9.08px;top:346.00px;font-size:10.5px;height:10.5px;font-family:'Liberation Sans',sans-serif;color:#5a5a5c;font-weight:normal;-webkit-text-stroke:0.55px #5a5a5c;">9</span>
<span class="t" style="left:6.16px;top:363.00px;font-size:10.5px;height:10.5px;font-family:'Liberation Sans',sans-serif;color:#5a5a5c;font-weight:normal;-webkit-text-stroke:0.55px #5a5a5c;">10</span>
<span class="t" style="left:6.55px;top:380.00px;font-size:10.5px;height:10.5px;font-family:'Liberation Sans',sans-serif;color:#5a5a5c;font-weight:normal;-webkit-text-stroke:0.55px #5a5a5c;">11</span>
<span class="t" style="left:6.16px;top:397.00px;font-size:10.5px;height:10.5px;font-family:'Liberation Sans',sans-serif;color:#5a5a5c;font-weight:normal;-webkit-text-stroke:0.55px #5a5a5c;">12</span>
<span class="t" style="left:6.16px;top:414.00px;font-size:10.5px;height:10.5px;font-family:'Liberation Sans',sans-serif;color:#5a5a5c;font-weight:normal;-webkit-text-stroke:0.55px #5a5a5c;">13</span>
<span class="t" style="left:6.16px;top:431.00px;font-size:10.5px;height:10.5px;font-family:'Liberation Sans',sans-serif;color:#5a5a5c;font-weight:normal;-webkit-text-stroke:0.55px #5a5a5c;">14</span>
<span class="t" style="left:6.16px;top:448.00px;font-size:10.5px;height:10.5px;font-family:'Liberation Sans',sans-serif;color:#5a5a5c;font-weight:normal;-webkit-text-stroke:0.55px #5a5a5c;">15</span>
<span class="t" style="left:6.16px;top:465.00px;font-size:10.5px;height:10.5px;font-family:'Liberation Sans',sans-serif;color:#5a5a5c;font-weight:normal;-webkit-text-stroke:0.55px #5a5a5c;">16</span>
<span class="t" style="left:6.16px;top:482.00px;font-size:10.5px;height:10.5px;font-family:'Liberation Sans',sans-serif;color:#5a5a5c;font-weight:normal;-webkit-text-stroke:0.55px #5a5a5c;">17</span>
<span class="t" style="left:6.16px;top:499.00px;font-size:10.5px;height:10.5px;font-family:'Liberation Sans',sans-serif;color:#5a5a5c;font-weight:normal;-webkit-text-stroke:0.55px #5a5a5c;">18</span>
<span class="t" style="left:6.16px;top:516.00px;font-size:10.5px;height:10.5px;font-family:'Liberation Sans',sans-serif;color:#5a5a5c;font-weight:normal;-webkit-text-stroke:0.55px #5a5a5c;">19</span>
<span class="t" style="left:6.16px;top:533.00px;font-size:10.5px;height:10.5px;font-family:'Liberation Sans',sans-serif;color:#5a5a5c;font-weight:normal;-webkit-text-stroke:0.55px #5a5a5c;">20</span>
<span class="t" style="left:6.16px;top:550.00px;font-size:10.5px;height:10.5px;font-family:'Liberation Sans',sans-serif;color:#5a5a5c;font-weight:normal;-webkit-text-stroke:0.55px #5a5a5c;">21</span>
<span class="t" style="left:6.16px;top:567.00px;font-size:10.5px;height:10.5px;font-family:'Liberation Sans',sans-serif;color:#5a5a5c;font-weight:normal;-webkit-text-stroke:0.55px #5a5a5c;">22</span>
<span class="t" style="left:6.16px;top:584.00px;font-size:10.5px;height:10.5px;font-family:'Liberation Sans',sans-serif;color:#5a5a5c;font-weight:normal;-webkit-text-stroke:0.55px #5a5a5c;">23</span>
<span class="t" style="left:6.16px;top:601.00px;font-size:10.5px;height:10.5px;font-family:'Liberation Sans',sans-serif;color:#5a5a5c;font-weight:normal;-webkit-text-stroke:0.55px #5a5a5c;">24</span>
<span class="t" style="left:6.16px;top:618.00px;font-size:10.5px;height:10.5px;font-family:'Liberation Sans',sans-serif;color:#5a5a5c;font-weight:normal;-webkit-text-stroke:0.55px #5a5a5c;">25</span>
<span class="t" style="left:6.16px;top:635.00px;font-size:10.5px;height:10.5px;font-family:'Liberation Sans',sans-serif;color:#5a5a5c;font-weight:normal;-webkit-text-stroke:0.55px #5a5a5c;">26</span>
<span class="t" style="left:6.16px;top:652.00px;font-size:10.5px;height:10.5px;font-family:'Liberation Sans',sans-serif;color:#5a5a5c;font-weight:normal;-webkit-text-stroke:0.55px #5a5a5c;">27</span>
<span class="t" style="left:6.16px;top:669.00px;font-size:10.5px;height:10.5px;font-family:'Liberation Sans',sans-serif;color:#5a5a5c;font-weight:normal;-webkit-text-stroke:0.55px #5a5a5c;">28</span>
<span class="t" style="left:27.00px;top:210.00px;font-size:10.5px;height:10.5px;font-family:'Liberation Sans',sans-serif;color:#5e5656;font-weight:normal;transform:scaleX(1.0411);transform-origin:left top;-webkit-text-stroke:0.55px #5e5656;">FB_voaItemValu</span>
<span class="t" style="left:1242.47px;top:210.00px;font-size:10.5px;height:10.5px;font-family:'Liberation Sans',sans-serif;color:#5e5656;font-weight:normal;transform:scaleX(1.1734);transform-origin:right top;-webkit-text-stroke:0.55px #5e5656;">equest</span>
<span class="t" style="left:1290.00px;top:210.00px;font-size:10.5px;height:10.5px;font-family:'Liberation Sans',sans-serif;color:#5e5656;font-weight:normal;transform:scaleX(1.1141);transform-origin:left top;-webkit-text-stroke:0.55px #5e5656;">FB_heade</span>
<span class="t" style="left:1291.00px;top:227.00px;font-size:10.5px;height:10.5px;font-family:'Liberation Sans',sans-serif;color:#5e5656;font-weight:normal;transform:scaleX(1.1127);transform-origin:left top;-webkit-text-stroke:0.55px #5e5656;">Flat Fee -</span>
<span class="t" style="left:1291.00px;top:244.00px;font-size:10.5px;height:10.5px;font-family:'Liberation Sans',sans-serif;color:#5e5656;font-weight:normal;transform:scaleX(1.1127);transform-origin:left top;-webkit-text-stroke:0.55px #5e5656;">Flat Fee -</span>
<span class="t" style="left:1291.00px;top:261.00px;font-size:10.5px;height:10.5px;font-family:'Liberation Sans',sans-serif;color:#5e5656;font-weight:normal;transform:scaleX(1.1127);transform-origin:left top;-webkit-text-stroke:0.55px #5e5656;">Flat Fee -</span>
<span class="t" style="left:1291.00px;top:278.00px;font-size:10.5px;height:10.5px;font-family:'Liberation Sans',sans-serif;color:#5e5656;font-weight:normal;transform:scaleX(1.1127);transform-origin:left top;-webkit-text-stroke:0.55px #5e5656;">Flat Fee -</span>
<span class="t" style="left:1291.00px;top:295.00px;font-size:10.5px;height:10.5px;font-family:'Liberation Sans',sans-serif;color:#5e5656;font-weight:normal;transform:scaleX(1.1127);transform-origin:left top;-webkit-text-stroke:0.55px #5e5656;">Flat Fee -</span>
<span class="t" style="left:1291.00px;top:312.00px;font-size:10.5px;height:10.5px;font-family:'Liberation Sans',sans-serif;color:#5e5656;font-weight:normal;transform:scaleX(1.1127);transform-origin:left top;-webkit-text-stroke:0.55px #5e5656;">Flat Fee -</span>
<span class="t" style="left:1291.00px;top:329.00px;font-size:10.5px;height:10.5px;font-family:'Liberation Sans',sans-serif;color:#5e5656;font-weight:normal;transform:scaleX(1.1127);transform-origin:left top;-webkit-text-stroke:0.55px #5e5656;">Flat Fee -</span>
<span class="t" style="left:1291.00px;top:346.00px;font-size:10.5px;height:10.5px;font-family:'Liberation Sans',sans-serif;color:#5e5656;font-weight:normal;transform:scaleX(1.1127);transform-origin:left top;-webkit-text-stroke:0.55px #5e5656;">Flat Fee -</span>
<span class="t" style="left:1291.00px;top:363.00px;font-size:10.5px;height:10.5px;font-family:'Liberation Sans',sans-serif;color:#5e5656;font-weight:normal;transform:scaleX(1.1127);transform-origin:left top;-webkit-text-stroke:0.55px #5e5656;">Flat Fee -</span>
<span class="t" style="left:1291.00px;top:380.00px;font-size:10.5px;height:10.5px;font-family:'Liberation Sans',sans-serif;color:#5e5656;font-weight:normal;transform:scaleX(1.1127);transform-origin:left top;-webkit-text-stroke:0.55px #5e5656;">Flat Fee -</span>
<span class="t" style="left:1291.00px;top:397.00px;font-size:10.5px;height:10.5px;font-family:'Liberation Sans',sans-serif;color:#5e5656;font-weight:normal;transform:scaleX(1.1127);transform-origin:left top;-webkit-text-stroke:0.55px #5e5656;">Flat Fee -</span>
<span class="t" style="left:1291.00px;top:414.00px;font-size:10.5px;height:10.5px;font-family:'Liberation Sans',sans-serif;color:#5e5656;font-weight:normal;transform:scaleX(1.1127);transform-origin:left top;-webkit-text-stroke:0.55px #5e5656;">Flat Fee -</span>
<span class="t" style="left:1291.00px;top:431.00px;font-size:10.5px;height:10.5px;font-family:'Liberation Sans',sans-serif;color:#5e5656;font-weight:normal;transform:scaleX(1.1127);transform-origin:left top;-webkit-text-stroke:0.55px #5e5656;">Flat Fee -</span>
<span class="t" style="left:1291.00px;top:448.00px;font-size:10.5px;height:10.5px;font-family:'Liberation Sans',sans-serif;color:#5e5656;font-weight:normal;transform:scaleX(1.1127);transform-origin:left top;-webkit-text-stroke:0.55px #5e5656;">Flat Fee -</span>
<span class="t" style="left:1291.00px;top:465.00px;font-size:10.5px;height:10.5px;font-family:'Liberation Sans',sans-serif;color:#5e5656;font-weight:normal;transform:scaleX(1.1127);transform-origin:left top;-webkit-text-stroke:0.55px #5e5656;">Flat Fee -</span>
<span class="t" style="left:1291.00px;top:482.00px;font-size:10.5px;height:10.5px;font-family:'Liberation Sans',sans-serif;color:#5e5656;font-weight:normal;transform:scaleX(1.1127);transform-origin:left top;-webkit-text-stroke:0.55px #5e5656;">Flat Fee -</span>
<span class="t" style="left:1291.00px;top:499.00px;font-size:10.5px;height:10.5px;font-family:'Liberation Sans',sans-serif;color:#5e5656;font-weight:normal;transform:scaleX(1.1127);transform-origin:left top;-webkit-text-stroke:0.55px #5e5656;">Flat Fee -</span>
<span class="t" style="left:1291.00px;top:516.00px;font-size:10.5px;height:10.5px;font-family:'Liberation Sans',sans-serif;color:#5e5656;font-weight:normal;transform:scaleX(1.1127);transform-origin:left top;-webkit-text-stroke:0.55px #5e5656;">Flat Fee -</span>
<span class="t" style="left:1291.00px;top:533.00px;font-size:10.5px;height:10.5px;font-family:'Liberation Sans',sans-serif;color:#5e5656;font-weight:normal;transform:scaleX(1.1127);transform-origin:left top;-webkit-text-stroke:0.55px #5e5656;">Flat Fee -</span>
<span class="t" style="left:1291.00px;top:550.00px;font-size:10.5px;height:10.5px;font-family:'Liberation Sans',sans-serif;color:#5e5656;font-weight:normal;transform:scaleX(1.1127);transform-origin:left top;-webkit-text-stroke:0.55px #5e5656;">Flat Fee -</span>
<span class="t" style="left:1291.00px;top:567.00px;font-size:10.5px;height:10.5px;font-family:'Liberation Sans',sans-serif;color:#5e5656;font-weight:normal;transform:scaleX(1.1127);transform-origin:left top;-webkit-text-stroke:0.55px #5e5656;">Flat Fee -</span>
<span class="t" style="left:1291.00px;top:584.00px;font-size:10.5px;height:10.5px;font-family:'Liberation Sans',sans-serif;color:#5e5656;font-weight:normal;transform:scaleX(1.1127);transform-origin:left top;-webkit-text-stroke:0.55px #5e5656;">Flat Fee -</span>
<span class="t" style="left:1291.00px;top:601.00px;font-size:10.5px;height:10.5px;font-family:'Liberation Sans',sans-serif;color:#5e5656;font-weight:normal;transform:scaleX(1.1127);transform-origin:left top;-webkit-text-stroke:0.55px #5e5656;">Flat Fee -</span>
<span class="t" style="left:1291.00px;top:618.00px;font-size:10.5px;height:10.5px;font-family:'Liberation Sans',sans-serif;color:#5e5656;font-weight:normal;transform:scaleX(1.1127);transform-origin:left top;-webkit-text-stroke:0.55px #5e5656;">Flat Fee -</span>
<span class="t" style="left:1291.00px;top:635.00px;font-size:10.5px;height:10.5px;font-family:'Liberation Sans',sans-serif;color:#5e5656;font-weight:normal;transform:scaleX(1.1127);transform-origin:left top;-webkit-text-stroke:0.55px #5e5656;">Flat Fee -</span>
<span class="t" style="left:1291.00px;top:652.00px;font-size:10.5px;height:10.5px;font-family:'Liberation Sans',sans-serif;color:#5e5656;font-weight:normal;transform:scaleX(1.1127);transform-origin:left top;-webkit-text-stroke:0.55px #5e5656;">Flat Fee -</span>
<span class="t" style="left:1291.00px;top:669.00px;font-size:10.5px;height:10.5px;font-family:'Liberation Sans',sans-serif;color:#5e5656;font-weight:normal;transform:scaleX(1.1127);transform-origin:left top;-webkit-text-stroke:0.55px #5e5656;">Flat Fee -</span>
<span class="t" style="left:203.76px;top:618.00px;font-size:10.5px;height:10.5px;font-family:'Liberation Sans',sans-serif;color:#5e5656;font-weight:normal;transform:scaleX(1.0267);transform-origin:right top;-webkit-text-stroke:0.55px #5e5656;">9</span>
<span class="t" style="left:214.40px;top:618.00px;font-size:10.5px;height:10.5px;font-family:'Liberation Sans',sans-serif;color:#5e5656;font-weight:normal;transform:scaleX(0.9449);transform-origin:left top;-webkit-text-stroke:0.55px #5e5656;">P3RP8282</span>
<span class="t" style="left:411.91px;top:618.00px;font-size:10.5px;height:10.5px;font-family:'Liberation Sans',sans-serif;color:#5e5656;font-weight:normal;-webkit-text-stroke:0.55px #5e5656;">5640000</span>
<span class="t" style="left:670.50px;top:618.00px;font-size:10.5px;height:10.5px;font-family:'Liberation Sans',sans-serif;color:#5e5656;font-weight:normal;transform:scaleX(0.9930);transform-origin:right top;-webkit-text-stroke:0.55px #5e5656;">70924</span>
<span class="t" style="left:706.30px;top:618.00px;font-size:10.5px;height:10.5px;font-family:'Liberation Sans',sans-serif;color:#5e5656;font-weight:normal;-webkit-text-stroke:0.55px #5e5656;">G-038418PD4-OR6</span>
<span class="t" style="left:891.89px;top:618.00px;font-size:10.5px;height:10.5px;font-family:'Liberation Sans',sans-serif;color:#5e5656;font-weight:normal;transform:scaleX(1.0204);transform-origin:right top;-webkit-text-stroke:0.55px #5e5656;">4650122420</span>
<span class="t" style="left:1082.16px;top:618.00px;font-size:10.5px;height:10.5px;font-family:'Liberation Sans',sans-serif;color:#5e5656;font-weight:normal;transform:scaleX(1.0267);transform-origin:right top;-webkit-text-stroke:0.55px #5e5656;">2</span>
<span class="t" style="left:1142.24px;top:618.00px;font-size:10.5px;height:10.5px;font-family:'Liberation Sans',sans-serif;color:#5e5656;font-weight:normal;transform:scaleX(1.0274);transform-origin:right top;-webkit-text-stroke:0.55px #5e5656;">2150</span>
<span class="t" style="left:203.76px;top:635.00px;font-size:10.5px;height:10.5px;font-family:'Liberation Sans',sans-serif;color:#5e5656;font-weight:normal;transform:scaleX(1.0267);transform-origin:right top;-webkit-text-stroke:0.55px #5e5656;">8</span>
<span class="t" style="left:214.40px;top:635.00px;font-size:10.5px;height:10.5px;font-family:'Liberation Sans',sans-serif;color:#5e5656;font-weight:normal;transform:scaleX(0.9449);transform-origin:left top;-webkit-text-stroke:0.55px #5e5656;">P3RP8282</span>
<span class="t" style="left:411.91px;top:635.00px;font-size:10.5px;height:10.5px;font-family:'Liberation Sans',sans-serif;color:#5e5656;font-weight:normal;-webkit-text-stroke:0.55px #5e5656;">6486000</span>
<span class="t" style="left:670.50px;top:635.00px;font-size:10.5px;height:10.5px;font-family:'Liberation Sans',sans-serif;color:#5e5656;font-weight:normal;transform:scaleX(0.9930);transform-origin:right top;-webkit-text-stroke:0.55px #5e5656;">70946</span>
<span class="t" style="left:706.30px;top:635.00px;font-size:10.5px;height:10.5px;font-family:'Liberation Sans',sans-serif;color:#5e5656;font-weight:normal;-webkit-text-stroke:0.55px #5e5656;">G-038418PD4-OR6</span>
<span class="t" style="left:891.89px;top:635.00px;font-size:10.5px;height:10.5px;font-family:'Liberation Sans',sans-serif;color:#5e5656;font-weight:normal;transform:scaleX(1.0204);transform-origin:right top;-webkit-text-stroke:0.55px #5e5656;">4650122420</span>
<span class="t" style="left:1082.16px;top:635.00px;font-size:10.5px;height:10.5px;font-family:'Liberation Sans',sans-serif;color:#5e5656;font-weight:normal;transform:scaleX(1.0267);transform-origin:right top;-webkit-text-stroke:0.55px #5e5656;">1</span>
<span class="t" style="left:1142.24px;top:635.00px;font-size:10.5px;height:10.5px;font-family:'Liberation Sans',sans-serif;color:#5e5656;font-weight:normal;transform:scaleX(1.0274);transform-origin:right top;-webkit-text-stroke:0.55px #5e5656;">2190</span>
<span class="t" style="left:203.76px;top:652.00px;font-size:10.5px;height:10.5px;font-family:'Liberation Sans',sans-serif;color:#5e5656;font-weight:normal;transform:scaleX(1.0267);transform-origin:right top;-webkit-text-stroke:0.55px #5e5656;">7</span>
<span class="t" style="left:214.40px;top:652.00px;font-size:10.5px;height:10.5px;font-family:'Liberation Sans',sans-serif;color:#5e5656;font-weight:normal;transform:scaleX(0.9449);transform-origin:left top;-webkit-text-stroke:0.55px #5e5656;">P3RP8282</span>
<span class="t" style="left:411.91px;top:652.00px;font-size:10.5px;height:10.5px;font-family:'Liberation Sans',sans-serif;color:#5e5656;font-weight:normal;-webkit-text-stroke:0.55px #5e5656;">2820000</span>
<span class="t" style="left:670.50px;top:652.00px;font-size:10.5px;height:10.5px;font-family:'Liberation Sans',sans-serif;color:#5e5656;font-weight:normal;transform:scaleX(0.9930);transform-origin:right top;-webkit-text-stroke:0.55px #5e5656;">70922</span>
<span class="t" style="left:706.30px;top:652.00px;font-size:10.5px;height:10.5px;font-family:'Liberation Sans',sans-serif;color:#5e5656;font-weight:normal;-webkit-text-stroke:0.55px #5e5656;">G-038418PD4-OR6</span>
<span class="t" style="left:891.89px;top:652.00px;font-size:10.5px;height:10.5px;font-family:'Liberation Sans',sans-serif;color:#5e5656;font-weight:normal;transform:scaleX(1.0204);transform-origin:right top;-webkit-text-stroke:0.55px #5e5656;">4650122420</span>
<span class="t" style="left:1082.16px;top:652.00px;font-size:10.5px;height:10.5px;font-family:'Liberation Sans',sans-serif;color:#5e5656;font-weight:normal;transform:scaleX(1.0267);transform-origin:right top;-webkit-text-stroke:0.55px #5e5656;">1</span>
<span class="t" style="left:1142.24px;top:652.00px;font-size:10.5px;height:10.5px;font-family:'Liberation Sans',sans-serif;color:#5e5656;font-weight:normal;transform:scaleX(1.0274);transform-origin:right top;-webkit-text-stroke:0.55px #5e5656;">2140</span>
<span class="t" style="left:203.76px;top:669.00px;font-size:10.5px;height:10.5px;font-family:'Liberation Sans',sans-serif;color:#5e5656;font-weight:normal;transform:scaleX(1.0267);transform-origin:right top;-webkit-text-stroke:0.55px #5e5656;">6</span>
<span class="t" style="left:214.40px;top:669.00px;font-size:10.5px;height:10.5px;font-family:'Liberation Sans',sans-serif;color:#5e5656;font-weight:normal;transform:scaleX(0.9449);transform-origin:left top;-webkit-text-stroke:0.55px #5e5656;">P3RP8282</span>
<span class="t" style="left:411.91px;top:669.00px;font-size:10.5px;height:10.5px;font-family:'Liberation Sans',sans-serif;color:#5e5656;font-weight:normal;-webkit-text-stroke:0.55px #5e5656;">5640000</span>
<span class="t" style="left:670.50px;top:669.00px;font-size:10.5px;height:10.5px;font-family:'Liberation Sans',sans-serif;color:#5e5656;font-weight:normal;transform:scaleX(0.9930);transform-origin:right top;-webkit-text-stroke:0.55px #5e5656;">70921</span>
<span class="t" style="left:706.30px;top:669.00px;font-size:10.5px;height:10.5px;font-family:'Liberation Sans',sans-serif;color:#5e5656;font-weight:normal;-webkit-text-stroke:0.55px #5e5656;">G-038418PD4-OR6</span>
<span class="t" style="left:891.89px;top:669.00px;font-size:10.5px;height:10.5px;font-family:'Liberation Sans',sans-serif;color:#5e5656;font-weight:normal;transform:scaleX(1.0204);transform-origin:right top;-webkit-text-stroke:0.55px #5e5656;">4650122420</span>
<span class="t" style="left:1082.16px;top:669.00px;font-size:10.5px;height:10.5px;font-family:'Liberation Sans',sans-serif;color:#5e5656;font-weight:normal;transform:scaleX(1.0267);transform-origin:right top;-webkit-text-stroke:0.55px #5e5656;">2</span>
<span class="t" style="left:1142.24px;top:669.00px;font-size:10.5px;height:10.5px;font-family:'Liberation Sans',sans-serif;color:#5e5656;font-weight:normal;transform:scaleX(1.0274);transform-origin:right top;-webkit-text-stroke:0.55px #5e5656;">2170</span>
<span class="t" style="left:112.00px;top:686.00px;font-size:13px;height:13px;font-family:'Liberation Sans',sans-serif;color:#3f7b52;font-weight:bold;transform:scaleX(0.9777);transform-origin:left top;">2017-03-07_job_report (1)</span>
</div>
<div class="a" style="left:111px;top:100px;width:1127px;height:514.5px;border-radius:10px;box-shadow:3px 3px 4px rgba(0,0,0,.3),6px 7px 10px rgba(0,0,0,.28)"></div>
<div class="a" style="left:111px;top:100px;width:1127px;height:514.5px;background:#0e4d70;border-radius:10px;"></div>
<div class="a" style="left:127px;top:118px;width:1093px;height:478px;background:#ffffff;border-radius:6px;"></div>
<div class="a" style="left:127px;top:150px;width:1093px;height:1px;background:#d2d2d2;"></div>
<div class="a" style="left:127px;top:182px;width:1093px;height:1px;background:#d2d2d2;"></div>
<div class="a" style="left:127px;top:214px;width:1093px;height:1px;background:#d2d2d2;"></div>
<div class="a" style="left:127px;top:246px;width:1093px;height:1px;background:#d2d2d2;"></div>
<div class="a" style="left:127px;top:278px;width:1093px;height:1px;background:#d2d2d2;"></div>
<div class="a" style="left:127px;top:310px;width:1093px;height:1px;background:#d2d2d2;"></div>
<div class="a" style="left:127px;top:342px;width:1093px;height:1px;background:#d2d2d2;"></div>
<div class="a" style="left:127px;top:374px;width:1093px;height:1px;background:#d2d2d2;"></div>
<div class="a" style="left:127px;top:406px;width:1093px;height:1px;background:#d2d2d2;"></div>
<div class="a" style="left:127px;top:438px;width:1093px;height:1px;background:#d2d2d2;"></div>
<div class="a" style="left:127px;top:470px;width:1093px;height:1px;background:#d2d2d2;"></div>
<div class="a" style="left:127px;top:502px;width:1093px;height:1px;background:#d2d2d2;"></div>
<div class="a" style="left:127px;top:534px;width:1093px;height:1px;background:#d2d2d2;"></div>
<div class="a" style="left:127px;top:566px;width:1093px;height:1px;background:#d2d2d2;"></div>
<div class="a" style="left:323px;top:118px;width:1px;height:460px;background:#d4d4d4;"></div>
<div class="a" style="left:595px;top:118px;width:1px;height:460px;background:#d4d4d4;"></div>
<div class="a" style="left:854px;top:118px;width:1px;height:460px;background:#d4d4d4;"></div>
<div class="a" style="left:998px;top:118px;width:1px;height:460px;background:#d4d4d4;"></div>
<span class="t" style="left:130.50px;top:126.00px;font-size:21.5px;height:21.5px;font-family:'Liberation Sans',sans-serif;color:#000;font-weight:normal;transform:scaleX(0.9077);transform-origin:left top;-webkit-text-stroke:0.25px #000;">FB_wbs</span>
<span class="t" style="left:328.20px;top:126.00px;font-size:21.5px;height:21.5px;font-family:'Liberation Sans',sans-serif;color:#000;font-weight:normal;transform:scaleX(0.9651);transform-origin:left top;-webkit-text-stroke:0.25px #000;">FB_outlineAgreementList</span>
<span class="t" style="left:599.50px;top:126.00px;font-size:21.5px;height:21.5px;font-family:'Liberation Sans',sans-serif;color:#000;font-weight:normal;transform:scaleX(0.9754);transform-origin:left top;-webkit-text-stroke:0.25px #000;">FB_materialQuantityList</span>
<span class="t" style="left:859.20px;top:126.00px;font-size:21.5px;height:21.5px;font-family:'Liberation Sans',sans-serif;color:#000;font-weight:normal;transform:scaleX(0.9408);transform-origin:left top;-webkit-text-stroke:0.25px #000;">FB_itemList</span>
<span class="t" style="left:1002.80px;top:126.00px;font-size:21.5px;height:21.5px;font-family:'Liberation Sans',sans-serif;color:#000;font-weight:normal;transform:scaleX(0.9261);transform-origin:left top;-webkit-text-stroke:0.25px #000;">FB_changeRequest</span>
<span class="t" style="left:130.50px;top:158.00px;font-size:21.5px;height:21.5px;font-family:'Liberation Sans',sans-serif;color:#000;font-weight:normal;transform:scaleX(0.9374);transform-origin:left top;-webkit-text-stroke:0.25px #000;">G-038418PD4-OR6</span>
<span class="t" style="left:471.92px;top:158.00px;font-size:21.5px;height:21.5px;font-family:'Liberation Sans',sans-serif;color:#000;font-weight:normal;transform:scaleX(0.9935);transform-origin:right top;-webkit-text-stroke:0.25px #000;">4650122420</span>
<span class="t" style="left:838.53px;top:158.00px;font-size:21.5px;height:21.5px;font-family:'Liberation Sans',sans-serif;color:#000;font-weight:normal;-webkit-text-stroke:0.25px #000;">2</span>
<span class="t" style="left:946.66px;top:158.00px;font-size:21.5px;height:21.5px;font-family:'Liberation Sans',sans-serif;color:#000;font-weight:normal;transform:scaleX(0.9865);transform-origin:right top;-webkit-text-stroke:0.25px #000;">2180</span>
<span class="t" style="left:130.50px;top:190.00px;font-size:21.5px;height:21.5px;font-family:'Liberation Sans',sans-serif;color:#000;font-weight:normal;transform:scaleX(0.9374);transform-origin:left top;-webkit-text-stroke:0.25px #000;">G-038418PD4-OR6</span>
<span class="t" style="left:471.92px;top:190.00px;font-size:21.5px;height:21.5px;font-family:'Liberation Sans',sans-serif;color:#000;font-weight:normal;transform:scaleX(0.9935);transform-origin:right top;-webkit-text-stroke:0.25px #000;">4650122420</span>
<span class="t" style="left:838.53px;top:190.00px;font-size:21.5px;height:21.5px;font-family:'Liberation Sans',sans-serif;color:#000;font-weight:normal;-webkit-text-stroke:0.25px #000;">3</span>
<span class="t" style="left:946.66px;top:190.00px;font-size:21.5px;height:21.5px;font-family:'Liberation Sans',sans-serif;color:#000;font-weight:normal;transform:scaleX(0.9865);transform-origin:right top;-webkit-text-stroke:0.25px #000;">2260</span>
<span class="t" style="left:130.50px;top:222.00px;font-size:21.5px;height:21.5px;font-family:'Liberation Sans',sans-serif;color:#000;font-weight:normal;transform:scaleX(0.9374);transform-origin:left top;-webkit-text-stroke:0.25px #000;">G-038418PD4-OR6</span>
<span class="t" style="left:471.92px;top:222.00px;font-size:21.5px;height:21.5px;font-family:'Liberation Sans',sans-serif;color:#000;font-weight:normal;transform:scaleX(0.9935);transform-origin:right top;-webkit-text-stroke:0.25px #000;">4650122420</span>
<span class="t" style="left:838.53px;top:222.00px;font-size:21.5px;height:21.5px;font-family:'Liberation Sans',sans-serif;color:#000;font-weight:normal;-webkit-text-stroke:0.25px #000;">3</span>
<span class="t" style="left:946.66px;top:222.00px;font-size:21.5px;height:21.5px;font-family:'Liberation Sans',sans-serif;color:#000;font-weight:normal;transform:scaleX(0.9865);transform-origin:right top;-webkit-text-stroke:0.25px #000;">2100</span>
<span class="t" style="left:130.50px;top:254.00px;font-size:21.5px;height:21.5px;font-family:'Liberation Sans',sans-serif;color:#000;font-weight:normal;transform:scaleX(0.9374);transform-origin:left top;-webkit-text-stroke:0.25px #000;">G-038418PD4-OR6</span>
<span class="t" style="left:471.92px;top:254.00px;font-size:21.5px;height:21.5px;font-family:'Liberation Sans',sans-serif;color:#000;font-weight:normal;transform:scaleX(0.9935);transform-origin:right top;-webkit-text-stroke:0.25px #000;">4650122420</span>
<span class="t" style="left:838.53px;top:254.00px;font-size:21.5px;height:21.5px;font-family:'Liberation Sans',sans-serif;color:#000;font-weight:normal;-webkit-text-stroke:0.25px #000;">1</span>
<span class="t" style="left:946.66px;top:254.00px;font-size:21.5px;height:21.5px;font-family:'Liberation Sans',sans-serif;color:#000;font-weight:normal;transform:scaleX(0.9865);transform-origin:right top;-webkit-text-stroke:0.25px #000;">1570</span>
<span class="t" style="left:130.50px;top:286.00px;font-size:21.5px;height:21.5px;font-family:'Liberation Sans',sans-serif;color:#000;font-weight:normal;transform:scaleX(0.9374);transform-origin:left top;-webkit-text-stroke:0.25px #000;">G-038418PD4-OR6</span>
<span class="t" style="left:471.92px;top:286.00px;font-size:21.5px;height:21.5px;font-family:'Liberation Sans',sans-serif;color:#000;font-weight:normal;transform:scaleX(0.9935);transform-origin:right top;-webkit-text-stroke:0.25px #000;">4650122433</span>
<span class="t" style="left:838.53px;top:286.00px;font-size:21.5px;height:21.5px;font-family:'Liberation Sans',sans-serif;color:#000;font-weight:normal;-webkit-text-stroke:0.25px #000;">1</span>
<span class="t" style="left:958.62px;top:286.00px;font-size:21.5px;height:21.5px;font-family:'Liberation Sans',sans-serif;color:#000;font-weight:normal;transform:scaleX(0.9868);transform-origin:right top;-webkit-text-stroke:0.25px #000;">610</span>
<span class="t" style="left:130.50px;top:318.00px;font-size:21.5px;height:21.5px;font-family:'Liberation Sans',sans-serif;color:#000;font-weight:normal;transform:scaleX(0.9374);transform-origin:left top;-webkit-text-stroke:0.25px #000;">G-038418PD4-OR6</span>
<span class="t" style="left:471.92px;top:318.00px;font-size:21.5px;height:21.5px;font-family:'Liberation Sans',sans-serif;color:#000;font-weight:normal;transform:scaleX(0.9935);transform-origin:right top;-webkit-text-stroke:0.25px #000;">4650122433</span>
<span class="t" style="left:838.53px;top:318.00px;font-size:21.5px;height:21.5px;font-family:'Liberation Sans',sans-serif;color:#000;font-weight:normal;-webkit-text-stroke:0.25px #000;">8</span>
<span class="t" style="left:946.66px;top:318.00px;font-size:21.5px;height:21.5px;font-family:'Liberation Sans',sans-serif;color:#000;font-weight:normal;transform:scaleX(0.9865);transform-origin:right top;-webkit-text-stroke:0.25px #000;">1030</span>
<span class="t" style="left:130.50px;top:350.00px;font-size:21.5px;height:21.5px;font-family:'Liberation Sans',sans-serif;color:#000;font-weight:normal;transform:scaleX(0.9374);transform-origin:left top;-webkit-text-stroke:0.25px #000;">G-038418PD4-OR6</span>
<span class="t" style="left:471.92px;top:350.00px;font-size:21.5px;height:21.5px;font-family:'Liberation Sans',sans-serif;color:#000;font-weight:normal;transform:scaleX(0.9935);transform-origin:right top;-webkit-text-stroke:0.25px #000;">4650122433</span>
<span class="t" style="left:838.53px;top:350.00px;font-size:21.5px;height:21.5px;font-family:'Liberation Sans',sans-serif;color:#000;font-weight:normal;-webkit-text-stroke:0.25px #000;">7</span>
<span class="t" style="left:958.62px;top:350.00px;font-size:21.5px;height:21.5px;font-family:'Liberation Sans',sans-serif;color:#000;font-weight:normal;transform:scaleX(0.9868);transform-origin:right top;-webkit-text-stroke:0.25px #000;">640</span>
<span class="t" style="left:130.50px;top:382.00px;font-size:21.5px;height:21.5px;font-family:'Liberation Sans',sans-serif;color:#000;font-weight:normal;transform:scaleX(0.9374);transform-origin:left top;-webkit-text-stroke:0.25px #000;">G-038418PD4-OR6</span>
<span class="t" style="left:471.92px;top:382.00px;font-size:21.5px;height:21.5px;font-family:'Liberation Sans',sans-serif;color:#000;font-weight:normal;transform:scaleX(0.9935);transform-origin:right top;-webkit-text-stroke:0.25px #000;">4650122433</span>
<span class="t" style="left:838.53px;top:382.00px;font-size:21.5px;height:21.5px;font-family:'Liberation Sans',sans-serif;color:#000;font-weight:normal;-webkit-text-stroke:0.25px #000;">6</span>
<span class="t" style="left:946.66px;top:382.00px;font-size:21.5px;height:21.5px;font-family:'Liberation Sans',sans-serif;color:#000;font-weight:normal;transform:scaleX(0.9865);transform-origin:right top;-webkit-text-stroke:0.25px #000;">1570</span>
<span class="t" style="left:130.50px;top:414.00px;font-size:21.5px;height:21.5px;font-family:'Liberation Sans',sans-serif;color:#000;font-weight:normal;transform:scaleX(0.9374);transform-origin:left top;-webkit-text-stroke:0.25px #000;">G-038418PD4-OR6</span>
<span class="t" style="left:471.92px;top:414.00px;font-size:21.5px;height:21.5px;font-family:'Liberation Sans',sans-serif;color:#000;font-weight:normal;transform:scaleX(0.9935);transform-origin:right top;-webkit-text-stroke:0.25px #000;">4650122433</span>
<span class="t" style="left:838.53px;top:414.00px;font-size:21.5px;height:21.5px;font-family:'Liberation Sans',sans-serif;color:#000;font-weight:normal;-webkit-text-stroke:0.25px #000;">4</span>
<span class="t" style="left:948.27px;top:414.00px;font-size:21.5px;height:21.5px;font-family:'Liberation Sans',sans-serif;color:#000;font-weight:normal;transform:scaleX(1.0209);transform-origin:right top;-webkit-text-stroke:0.25px #000;">1120</span>
<span class="t" style="left:130.50px;top:446.00px;font-size:21.5px;height:21.5px;font-family:'Liberation Sans',sans-serif;color:#000;font-weight:normal;transform:scaleX(0.9374);transform-origin:left top;-webkit-text-stroke:0.25px #000;">G-038418PD4-OR6</span>
<span class="t" style="left:471.92px;top:446.00px;font-size:21.5px;height:21.5px;font-family:'Liberation Sans',sans-serif;color:#000;font-weight:normal;transform:scaleX(0.9935);transform-origin:right top;-webkit-text-stroke:0.25px #000;">4650122433</span>
<span class="t" style="left:838.53px;top:446.00px;font-size:21.5px;height:21.5px;font-family:'Liberation Sans',sans-serif;color:#000;font-weight:normal;-webkit-text-stroke:0.25px #000;">3</span>
<span class="t" style="left:958.62px;top:446.00px;font-size:21.5px;height:21.5px;font-family:'Liberation Sans',sans-serif;color:#000;font-weight:normal;transform:scaleX(0.9868);transform-origin:right top;-webkit-text-stroke:0.25px #000;">750</span>
<span class="t" style="left:130.50px;top:478.00px;font-size:21.5px;height:21.5px;font-family:'Liberation Sans',sans-serif;color:#000;font-weight:normal;transform:scaleX(0.9374);transform-origin:left top;-webkit-text-stroke:0.25px #000;">G-038418PD4-OR6</span>
<span class="t" style="left:471.92px;top:478.00px;font-size:21.5px;height:21.5px;font-family:'Liberation Sans',sans-serif;color:#000;font-weight:normal;transform:scaleX(0.9935);transform-origin:right top;-webkit-text-stroke:0.25px #000;">4650122433</span>
<span class="t" style="left:838.53px;top:478.00px;font-size:21.5px;height:21.5px;font-family:'Liberation Sans',sans-serif;color:#000;font-weight:normal;-webkit-text-stroke:0.25px #000;">2</span>
<span class="t" style="left:958.62px;top:478.00px;font-size:21.5px;height:21.5px;font-family:'Liberation Sans',sans-serif;color:#000;font-weight:normal;transform:scaleX(0.9868);transform-origin:right top;-webkit-text-stroke:0.25px #000;">680</span>
<span class="t" style="left:130.50px;top:510.00px;font-size:21.5px;height:21.5px;font-family:'Liberation Sans',sans-serif;color:#000;font-weight:normal;transform:scaleX(0.9374);transform-origin:left top;-webkit-text-stroke:0.25px #000;">G-038418PD4-OR6</span>
<span class="t" style="left:471.92px;top:510.00px;font-size:21.5px;height:21.5px;font-family:'Liberation Sans',sans-serif;color:#000;font-weight:normal;transform:scaleX(0.9935);transform-origin:right top;-webkit-text-stroke:0.25px #000;">4650122420</span>
<span class="t" style="left:838.53px;top:510.00px;font-size:21.5px;height:21.5px;font-family:'Liberation Sans',sans-serif;color:#000;font-weight:normal;-webkit-text-stroke:0.25px #000;">1</span>
<span class="t" style="left:946.66px;top:510.00px;font-size:21.5px;height:21.5px;font-family:'Liberation Sans',sans-serif;color:#000;font-weight:normal;transform:scaleX(0.9865);transform-origin:right top;-webkit-text-stroke:0.25px #000;">2140</span>
<span class="t" style="left:130.50px;top:542.00px;font-size:21.5px;height:21.5px;font-family:'Liberation Sans',sans-serif;color:#000;font-weight:normal;transform:scaleX(0.9374);transform-origin:left top;-webkit-text-stroke:0.25px #000;">G-038418PD4-OR6</span>
<span class="t" style="left:471.92px;top:542.00px;font-size:21.5px;height:21.5px;font-family:'Liberation Sans',sans-serif;color:#000;font-weight:normal;transform:scaleX(0.9935);transform-origin:right top;-webkit-text-stroke:0.25px #000;">4650122420</span>
<span class="t" style="left:838.53px;top:542.00px;font-size:21.5px;height:21.5px;font-family:'Liberation Sans',sans-serif;color:#000;font-weight:normal;-webkit-text-stroke:0.25px #000;">1</span>
<span class="t" style="left:946.66px;top:542.00px;font-size:21.5px;height:21.5px;font-family:'Liberation Sans',sans-serif;color:#000;font-weight:normal;transform:scaleX(0.9865);transform-origin:right top;-webkit-text-stroke:0.25px #000;">2150</span>
<span class="t" style="left:130.50px;top:574.00px;font-size:21.5px;height:21.5px;font-family:'Liberation Sans',sans-serif;color:#000;font-weight:normal;transform:scaleX(0.9374);transform-origin:left top;-webkit-text-stroke:0.25px #000;">G-038418PD4-OR6</span>
<span class="t" style="left:471.92px;top:574.00px;font-size:21.5px;height:21.5px;font-family:'Liberation Sans',sans-serif;color:#000;font-weight:normal;transform:scaleX(0.9935);transform-origin:right top;-webkit-text-stroke:0.25px #000;">4650122420</span>
<span class="t" style="left:838.53px;top:574.00px;font-size:21.5px;height:21.5px;font-family:'Liberation Sans',sans-serif;color:#000;font-weight:normal;-webkit-text-stroke:0.25px #000;">1</span>
<span class="t" style="left:946.66px;top:574.00px;font-size:21.5px;height:21.5px;font-family:'Liberation Sans',sans-serif;color:#000;font-weight:normal;transform:scaleX(0.9865);transform-origin:right top;-webkit-text-stroke:0.25px #000;">2160</span>
<div class="a" style="left:127px;top:578px;width:1093px;height:18px;background:#f0f0f0;border-top:1px solid #c6c6c6;border-radius:0 0 6px 6px"></div>
<div class="a" style="left:184px;top:578px;width:178px;height:18px;background:#ffffff;border-left:1px solid #c6c6c6;border-right:1px solid #c6c6c6;"></div>
<svg style="left:138px;top:587px" width="8" height="10" viewBox="0 0 8 10"><path d="M1.5 1.5L5.5 5L1.5 8.5Z" fill="#bdbdbd"/></svg>
<div class="a" style="left:395.5px;top:583.5px;width:18px;height:18px;border-radius:50%;border:2px solid #6a6a6a"></div>
<div class="a" style="left:399.5px;top:591.5px;width:10px;height:2px;background:#444;"></div>
<div class="a" style="left:403.5px;top:587.5px;width:2px;height:10px;background:#444;"></div>
<div class="a" style="left:903px;top:586px;width:2px;height:2px;background:#666;"></div>
<div class="a" style="left:903px;top:590px;width:2px;height:2px;background:#666;"></div>
<div class="a" style="left:903px;top:594px;width:2px;height:2px;background:#666;"></div>
<div class="a" style="left:934px;top:585px;width:241px;height:11px;background:#d9d9d9;"></div>
<div class="a" style="left:920px;top:585px;width:15px;height:12px;background:#fafafa;border:1px solid #b0b0b0"></div>
<svg style="left:924px;top:587px" width="7" height="8" viewBox="0 0 7 8"><path d="M6 0L1 4L6 8Z" fill="#555"/></svg>
<div class="a" style="left:1175px;top:585px;width:45px;height:11px;background:#ffffff;border-top:1px solid #b8b8b8;border-left:1px solid #b8b8b8;border-radius:0 0 6px 0"></div>
<span class="t" style="left:196.80px;top:585.00px;font-size:15px;height:15px;font-family:'Liberation Sans',sans-serif;color:#1d6b3c;font-weight:bold;transform:scaleX(0.8451);transform-origin:left top;">2017-03-07_job_report (1)</span>
<div class="a" style="left:127px;top:596px;width:1093px;height:6px;background:#0e4d70;"></div>
</body></html>
